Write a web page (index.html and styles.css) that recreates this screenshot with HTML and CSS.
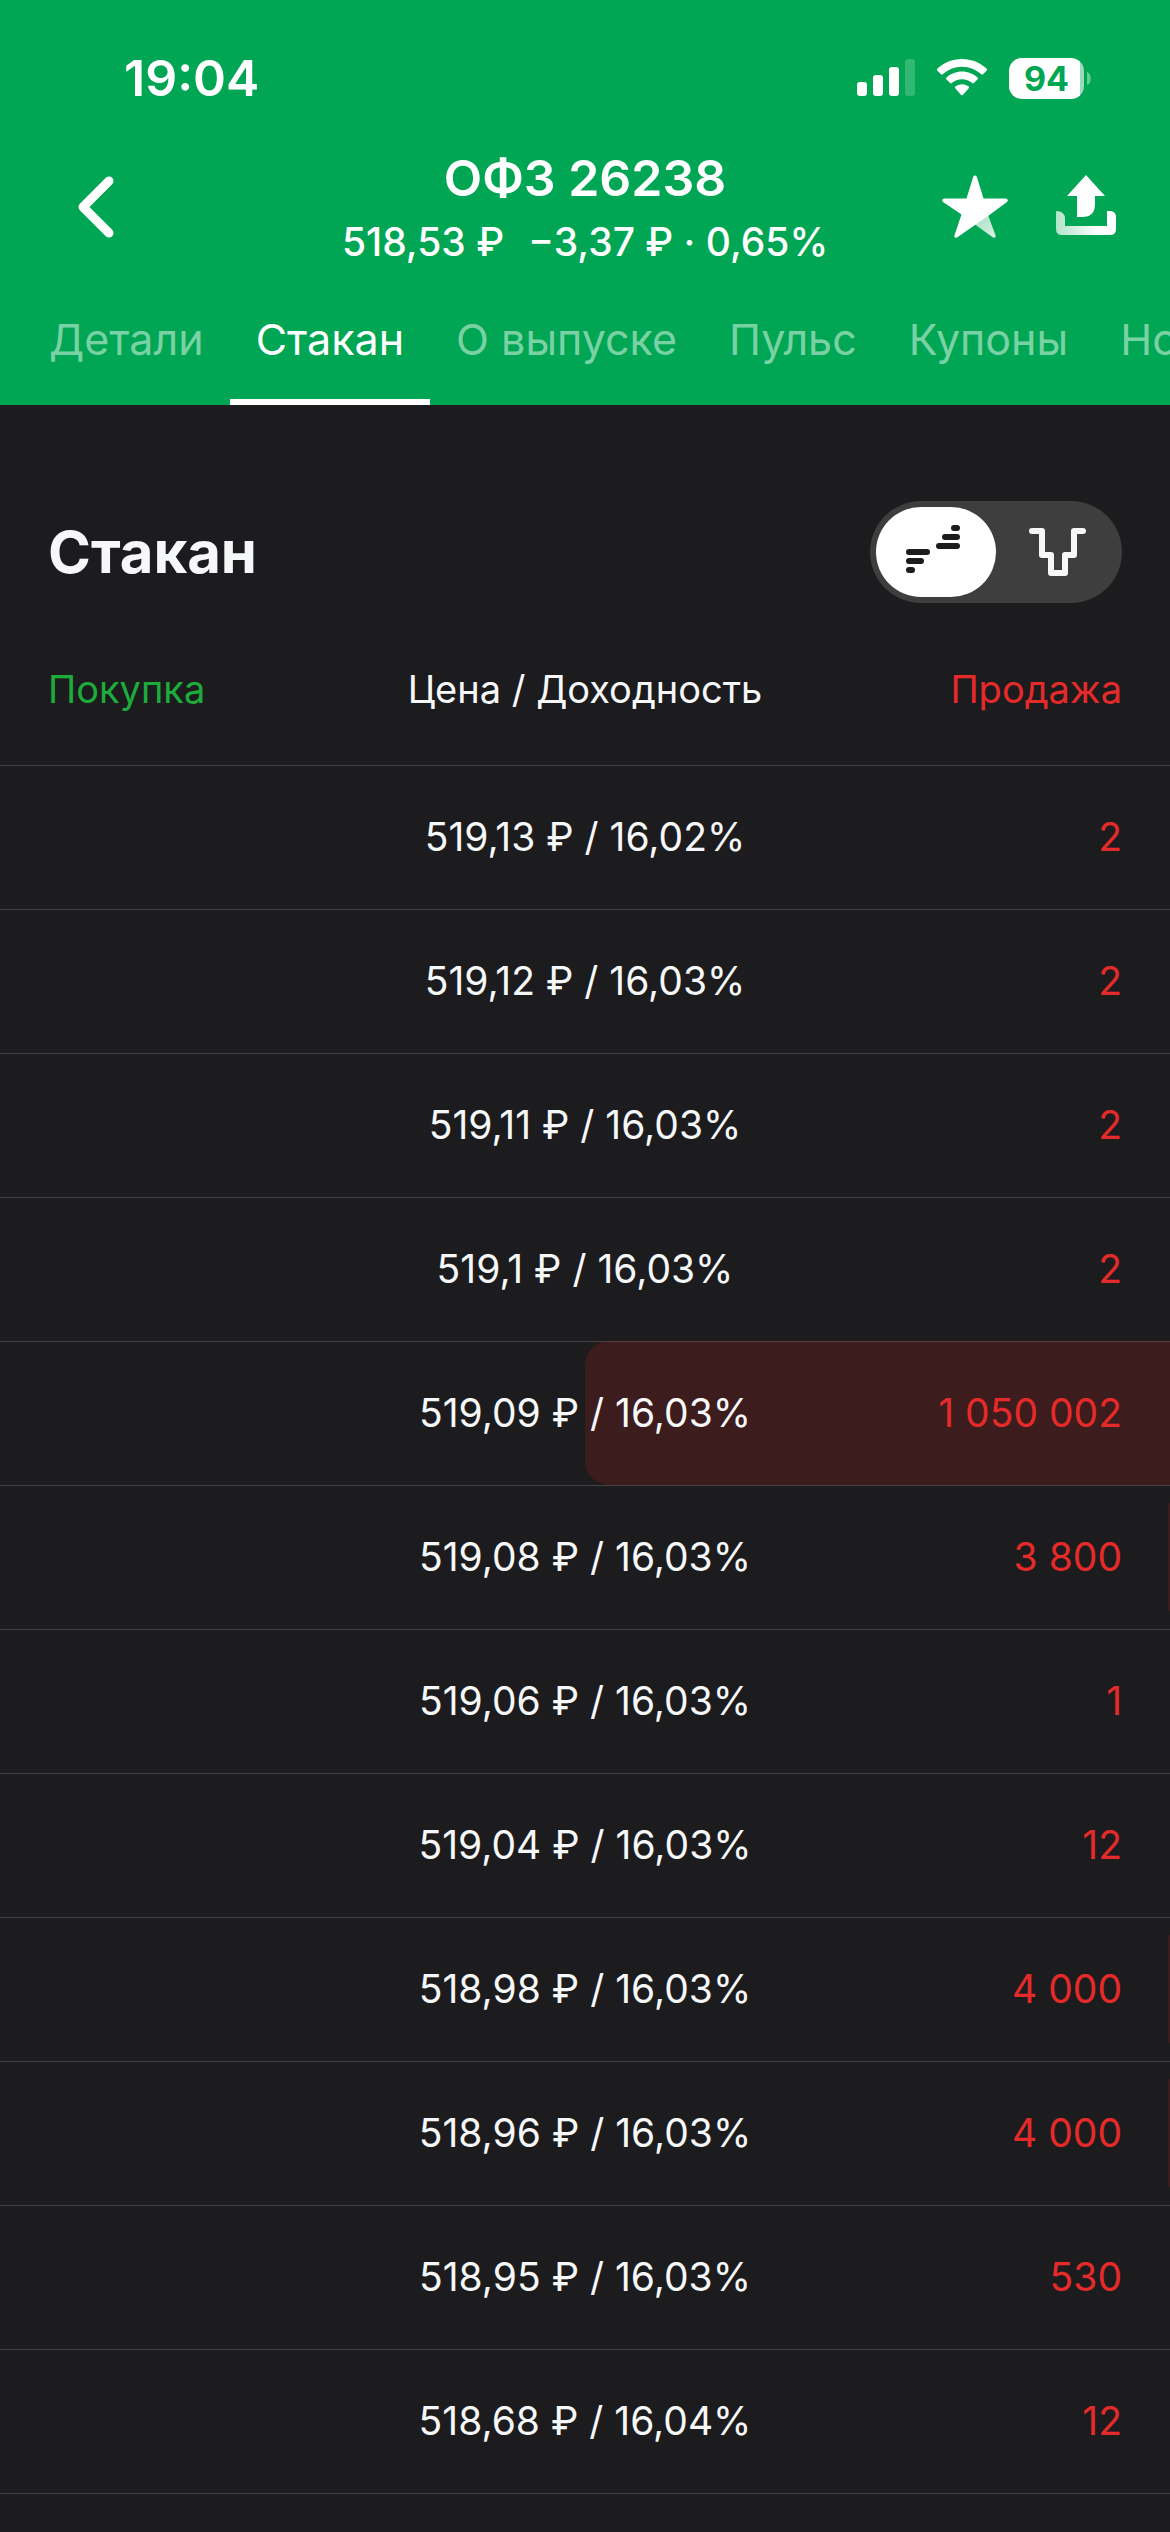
FILE: index.html
```html
<!DOCTYPE html>
<html lang="ru">
<head>
  <meta charset="UTF-8">
  <meta name="viewport" content="width=device-width, initial-scale=1.0">
  <title>ОФЗ 26238 — Стакан</title>
  <link rel="stylesheet" href="styles.css">
</head>
<body>

  <header class="header">
    <div class="status-bar">
      <span class="time">19:04</span>
      <div class="status-icons">
        <svg class="signal" width="58" height="42" viewBox="0 0 58 42" fill="#fff" aria-hidden="true">
          <rect x="0" y="25" width="10" height="14" rx="3"/>
          <rect x="16" y="18" width="10" height="21" rx="3"/>
          <rect x="32" y="10" width="10" height="29" rx="3"/>
          <rect x="48" y="2" width="10" height="37" rx="3" opacity="0.2"/>
        </svg>
        <svg class="wifi" width="50" height="42" viewBox="0 0 50 42" fill="#fff" aria-hidden="true">
          <path d="M25 2C34.600 2 43.300 5.700 49.800 11.800Q50.600 12.700 49.800 13.500L46 17.300Q45.200 18 44.300 17.300C39.200 12.600 32.500 9.700 25 9.700S10.800 12.600 5.700 17.300Q4.800 18 4 17.300L.200 13.500Q-.600 12.700 .200 11.800C6.700 5.700 15.400 2 25 2Z"/>
          <path d="M25 14.600C31 14.600 36.500 16.900 40.700 20.700Q41.500 21.500 40.700 22.300L36.900 26.100Q36.100 26.800 35.200 26.100C32.500 23.700 28.900 22.200 25 22.200S17.500 23.700 14.800 26.100Q13.900 26.800 13.100 26.100L9.300 22.300Q8.500 21.500 9.300 20.700C13.500 16.900 19 14.600 25 14.600Z"/>
          <path d="M25 27.200C27.600 27.200 29.900 28.100 31.700 29.600Q32.600 30.400 31.700 31.300L25.900 37.900Q25 38.800 24.100 37.900L18.300 31.300Q17.400 30.400 18.300 29.600C20.100 28.100 22.400 27.200 25 27.200Z"/>
        </svg>
        <div class="battery">
          <span class="battery-level">94</span>
          <svg width="4" height="13" viewBox="0 0 4 13" fill="#fff" opacity="0.4" aria-hidden="true">
            <path d="M0 0C5 2 5 11 0 13Z"/>
          </svg>
        </div>
      </div>
    </div>

    <div class="nav">
      <button class="icon-btn back" aria-label="Назад">
        <svg width="36" height="62" viewBox="0 0 36 62" fill="none" stroke="#fff" stroke-width="9" stroke-linecap="round" stroke-linejoin="round">
          <path d="M31 5L5 31L31 57"/>
        </svg>
      </button>
      <div class="nav-title">
        <h1>ОФЗ 26238</h1>
        <p><span>518,53 ₽</span><span>−3,37 ₽ · 0,65%</span></p>
      </div>
      <div class="nav-actions">
        <button class="icon-btn" aria-label="В избранное">
          <svg width="66" height="64" viewBox="0 0 66 64">
            <defs>
              <linearGradient id="starFold" x1="0" y1="0" x2="1" y2="1">
                <stop offset="0" stop-color="#fff" stop-opacity="0.65"/>
                <stop offset="1" stop-color="#fff" stop-opacity="0.85"/>
              </linearGradient>
            </defs>
            <path d="M46 40L53.600 60.500Q54 63.500 51 62.600L33 49.500Z" fill="url(#starFold)"/>
            <path d="M31.200 1.800Q33 -.600 34.800 1.800L41.500 23.500H64Q67 24.500 65 27L46 41L15 62.600Q12 63.500 12.400 60.500L19.500 39.500L1 27Q-1 24.500 2 23.500H24.500Z" fill="#fff"/>
          </svg>
        </button>
        <button class="icon-btn" aria-label="Поделиться">
          <svg width="60" height="64" viewBox="0 0 60 64">
            <defs>
              <linearGradient id="tray" x1="0" y1="0" x2="1" y2="0">
                <stop offset="0" stop-color="#fff" stop-opacity="0.7"/>
                <stop offset="0.7" stop-color="#fff"/>
              </linearGradient>
            </defs>
            <path d="M30 0L49 21H39V29Q39 42 26 42H21V21H11Z" fill="#fff"/>
            <path d="M0 36Q9 36 9 44V51H51V36H55Q60 37 60 42V54Q60 60 54 60H6Q0 60 0 54Z" fill="url(#tray)"/>
          </svg>
        </button>
      </div>
    </div>

    <nav class="tabs">
      <a href="#">Детали</a>
      <a href="#" class="active">Стакан</a>
      <a href="#">О выпуске</a>
      <a href="#">Пульс</a>
      <a href="#">Купоны</a>
      <a href="#">Новости</a>
    </nav>
  </header>

  <main>
    <div class="section-head">
      <h2>Стакан</h2>
      <div class="toggle">
        <button class="toggle-btn selected" aria-label="Таблица">
          <svg width="60" height="54" viewBox="0 0 60 54" fill="#1c1c1e">
            <rect x="45" y="0" width="9" height="6" rx="3"/>
            <rect x="36" y="9" width="18" height="6" rx="3"/>
            <rect x="30" y="18" width="24" height="6" rx="3"/>
            <rect x="0" y="24" width="24" height="6" rx="3"/>
            <rect x="0" y="33" width="18" height="6" rx="3"/>
            <rect x="0" y="42" width="9" height="6" rx="3"/>
          </svg>
        </button>
        <button class="toggle-btn" aria-label="График">
          <svg width="60" height="48" viewBox="-3 0 60 48" fill="none" stroke="#f6f7f8" stroke-width="6" stroke-linecap="round" stroke-linejoin="round">
            <path d="M3 3H13V27H22V45H36V27H45V3H54"/>
          </svg>
        </button>
      </div>
    </div>

    <table class="book">
      <thead>
        <tr>
          <th class="buy">Покупка</th>
          <th class="price">Цена / Доходность</th>
          <th class="sell">Продажа</th>
        </tr>
      </thead>
      <tbody id="bookRows"></tbody>
    </table>
  </main>

  <script src="book.js"></script>
</body>
</html>
```
FILE: styles.css
```css
* {
  margin: 0;
  padding: 0;
  box-sizing: border-box;
}
body {
  font-family: Inter, "Noto Sans", sans-serif;
  background-color: #1c1c1e;
  color: #f6f7f8;
  overflow-x: hidden;
}
button {
  border: none;
  background: none;
  cursor: pointer;
}
svg {
  display: block;
}
.header {
  background-color: #00a653;
  color: #fff;
}
.status-bar {
  display: flex;
  justify-content: space-between;
  align-items: center;
  padding: 48px 79px 0 124px;
}
.time {
  font-size: 50px;
  line-height: 60px;
  font-weight: 600;
}
.status-icons {
  display: flex;
  align-items: center;
  gap: 22px;
}
.battery {
  display: flex;
  align-items: center;
  gap: 3px;
}
.battery-level {
  width: 75px;
  height: 41px;
  border-radius: 13px;
  background: linear-gradient(to right, #fff 95%, #99dbba 95%);
  color: #00a653;
  font-size: 34px;
  line-height: 41px;
  font-weight: 700;
  text-align: center;
}
.nav {
  display: grid;
  grid-template-columns: 1fr auto 1fr;
  align-items: center;
  padding: 40px 54px 0;
}
.nav-title {
  text-align: center;
}
.nav-title h1 {
  font-size: 50px;
  line-height: 60px;
  font-weight: 600;
}
.nav-title p {
  display: flex;
  justify-content: center;
  gap: 24px;
  margin-top: 10px;
  font-size: 39px;
  line-height: 48px;
  font-weight: 500;
}
.nav-actions {
  display: flex;
  justify-content: flex-end;
  align-items: center;
  gap: 48px;
}
.back {
  justify-self: start;
  padding-left: 24px;
}
.tabs {
  display: flex;
  margin-top: 38px;
  padding-left: 23px;
  overflow: hidden;
}
.tabs a {
  flex: none;
  padding: 8px 26px 33px;
  border-bottom: 6px solid transparent;
  color: #7ad2a4;
  font-size: 43px;
  line-height: 54px;
  text-decoration: none;
}
.tabs .active {
  color: #fff;
  border-color: #fff;
}
.section-head {
  display: flex;
  justify-content: space-between;
  align-items: center;
  padding: 96px 48px 0;
}
.section-head h2 {
  font-size: 58px;
  line-height: 70px;
  font-weight: 700;
}
.toggle {
  display: flex;
  padding: 6px;
  border-radius: 51px;
  background-color: #3e3e3f;
}
.toggle-btn {
  display: flex;
  justify-content: center;
  align-items: center;
  width: 120px;
  height: 90px;
  border-radius: 45px;
}
.selected {
  background-color: #fff;
}
.book {
  width: 100%;
  border-collapse: collapse;
  table-layout: fixed;
  line-height: 48px;
}
.book th {
  height: 162px;
  padding-top: 10px;
  font-size: 38px;
  font-weight: 400;
  border-bottom: 1px solid #434345;
}
.book td {
  height: 144px;
  font-size: 39px;
  border-bottom: 1px solid #434345;
}
.book .buy {
  width: 28%;
  padding-left: 48px;
  text-align: left;
  color: #1dab3c;
}
.book .price {
  text-align: center;
}
.book .sell {
  width: 28%;
  padding-right: 48px;
  text-align: right;
  color: #e52a2a;
}
.book tbody tr,
.book tbody .price,
.book tbody .sell {
  position: relative;
}
/* volume bar behind the row */
.bar {
  position: absolute;
  top: 0;
  bottom: 0;
  right: 0;
  border-radius: 24px 0 0 24px;
  background-color: rgba(220, 30, 30, 0.17);
}
.bar-thin {
  top: 18px;
  bottom: 18px;
}
```
FILE: book.js
```js
const orders = [
  { price: '519,13', yield: '16,02', sell: 2 },
  { price: '519,12', yield: '16,03', sell: 2 },
  { price: '519,11', yield: '16,03', sell: 2 },
  { price: '519,1', yield: '16,03', sell: 2 },
  { price: '519,09', yield: '16,03', sell: 1050002 },
  { price: '519,08', yield: '16,03', sell: 3800 },
  { price: '519,06', yield: '16,03', sell: 1 },
  { price: '519,04', yield: '16,03', sell: 12 },
  { price: '518,98', yield: '16,03', sell: 4000 },
  { price: '518,96', yield: '16,03', sell: 4000 },
  { price: '518,95', yield: '16,03', sell: 530 },
  { price: '518,68', yield: '16,04', sell: 12 }
];

const bookRows = document.getElementById('bookRows');
const maxSell = Math.max(...orders.map(order => order.sell));

// 1050002 -> 1 050 002
function formatCount(count) {
  return String(count).replace(/\B(?=(\d{3})+$)/g, ' ');
}

orders.forEach(order => {
  const row = document.createElement('tr');
  // the largest order takes half of the row
  const width = order.sell / maxSell * 50;

  row.innerHTML = `
    <td class="buy"></td>
    <td class="price">${order.price} ₽ / ${order.yield}%</td>
    <td class="sell">${formatCount(order.sell)}</td>
  `;

  if (width > 0.1) {
    const bar = document.createElement('span');
    bar.className = width < 2 ? 'bar bar-thin' : 'bar';
    bar.style.width = width + '%';
    row.firstElementChild.prepend(bar);
  }

  bookRows.appendChild(row);
});
```
